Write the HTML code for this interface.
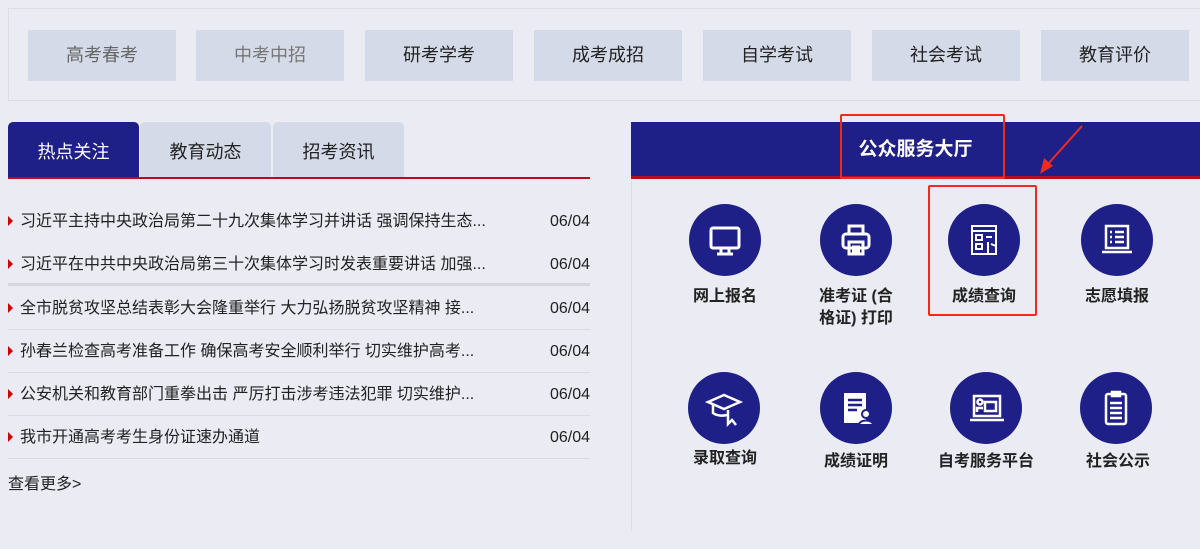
<!DOCTYPE html>
<html><head><meta charset="utf-8"><style>
*{margin:0;padding:0;box-sizing:border-box}
body{width:1200px;height:549px;background:#eaebf3;font-family:"Liberation Sans","Noto Sans CJK SC",sans-serif;position:relative;overflow:hidden;color:#222}
.top{position:absolute;left:8px;top:8px;width:1200px;height:93px;border:1px solid #dcdde6;border-right:none}
.btn{position:absolute;top:30px;width:148px;height:51px;background:#d5dae8;font-size:18px;text-align:center;line-height:51px;color:#222}
.tab{position:absolute;top:122px;height:56px;width:131px;background:#d5dae8;border-radius:5px 5px 0 0;font-size:18px;text-align:center;line-height:60px}
.red{position:absolute;left:8px;top:177px;width:582px;height:2px;background:#b3101c}
.row{position:absolute;left:8px;width:582px;height:43px;font-size:16px;line-height:43px;border-bottom:1px solid #d9dae2}
.row:before{content:"";position:absolute;left:0;top:16px;border-left:5px solid #c00;border-top:5px solid transparent;border-bottom:5px solid transparent}
.row span{position:absolute;left:12px}.row b{position:absolute;right:0;font-weight:normal}
.hd{position:absolute;left:631px;top:122px;width:569px;height:54px;background:#1e1f87;color:#fff;font-size:19px;font-weight:bold;text-align:center;line-height:56px}
.hdl{position:absolute;left:631px;top:176px;width:569px;height:3px;background:#b3101c}
.vl{position:absolute;left:631px;top:179px;width:1px;height:352px;background:#dcdde6}
.ic{position:absolute;width:72px;height:72px;border-radius:50%;background:#1e1f87}
.ic svg{width:72px;height:72px}
.lb{position:absolute;width:120px;text-align:center;font-size:16px;line-height:22px;font-weight:bold;color:#222}
.box{position:absolute;border:2px solid #f02a1f;border-radius:2px}
</style></head><body>
<div class="top"></div>
<div class="btn" style="left:28px;color:#666">高考春考</div>
<div class="btn" style="left:196px;color:#777">中考中招</div>
<div class="btn" style="left:365px">研考学考</div>
<div class="btn" style="left:534px">成考成招</div>
<div class="btn" style="left:703px">自学考试</div>
<div class="btn" style="left:872px">社会考试</div>
<div class="btn" style="left:1041px">教育评价</div>

<div class="tab" style="left:8px;background:#1e1f87;color:#fff">热点关注</div>
<div class="tab" style="left:140px">教育动态</div>
<div class="tab" style="left:273px">招考资讯</div>
<div class="red"></div>

<div class="row" style="top:200px;border:none"><span>习近平主持中央政治局第二十九次集体学习并讲话 强调保持生态...</span><b>06/04</b></div>
<div class="row" style="top:243px;border-bottom:3px solid #d5d6de"><span>习近平在中共中央政治局第三十次集体学习时发表重要讲话 加强...</span><b>06/04</b></div>
<div class="row" style="top:287px"><span>全市脱贫攻坚总结表彰大会隆重举行 大力弘扬脱贫攻坚精神 接...</span><b>06/04</b></div>
<div class="row" style="top:330px"><span>孙春兰检查高考准备工作 确保高考安全顺利举行 切实维护高考...</span><b>06/04</b></div>
<div class="row" style="top:373px"><span>公安机关和教育部门重拳出击 严厉打击涉考违法犯罪 切实维护...</span><b>06/04</b></div>
<div class="row" style="top:416px"><span>我市开通高考考生身份证速办通道</span><b>06/04</b></div>
<div style="position:absolute;left:8px;top:470px;font-size:16px">查看更多&gt;</div>

<div class="hd">公众服务大厅</div><div class="hdl"></div><div class="vl"></div>

<div class="ic" style="left:689px;top:204px"><svg viewBox="0 0 72 72" fill="none" stroke="#fff" stroke-width="3"><rect x="22" y="24" width="28" height="20" rx="2"/><path d="M32 44v5M40 44v5M28 50h16"/></svg></div>
<div class="ic" style="left:820px;top:204px"><svg viewBox="0 0 72 72" fill="none" stroke="#fff" stroke-width="3"><rect x="29" y="22" width="14" height="8"/><rect x="23" y="30" width="26" height="14" rx="3"/><rect x="29" y="38" width="14" height="12"/><path d="M32 43h8M32 47h8"/></svg></div>
<div class="ic" style="left:948px;top:204px"><svg viewBox="0 0 72 72" fill="none" stroke="#fff" stroke-width="2"><rect x="24" y="22" width="24" height="28"/><path d="M24 27h24"/><rect x="28" y="31" width="6" height="5"/><rect x="28" y="40" width="6" height="5"/><path d="M38 33h6M40 38v12h8v-8l-5-2"/></svg></div>
<div class="ic" style="left:1081px;top:204px"><svg viewBox="0 0 72 72" fill="none" stroke="#fff" stroke-width="2.5"><rect x="25" y="22" width="22" height="22"/><path d="M21 48h30M29 28h2M34 28h9M29 33h2M34 33h9M29 38h2M34 38h9"/></svg></div>

<div class="ic" style="left:688px;top:372px"><svg viewBox="0 0 72 72" fill="none" stroke="#fff" stroke-width="2.5"><path d="M20 30l16-7 16 7-16 7z"/><path d="M25 33v8c4 3 10 3 14 2"/><path d="M40 38l0 14 4-4 4 5"/></svg></div>
<div class="ic" style="left:820px;top:372px"><svg viewBox="0 0 72 72"><rect x="24" y="21" width="22" height="30" fill="#fff"/><path d="M28 28h14M28 33h14M28 38h9" stroke="#1e1f87" stroke-width="2.5"/><circle cx="46" cy="42" r="4" fill="#fff" stroke="#1e1f87" stroke-width="2"/><path d="M39 53c0-6 14-6 14 0z" fill="#fff" stroke="#1e1f87" stroke-width="2"/></svg></div>
<div class="ic" style="left:950px;top:372px"><svg viewBox="0 0 72 72" fill="none" stroke="#fff" stroke-width="2.5"><rect x="24" y="24" width="26" height="20"/><path d="M20 48h34"/><rect x="35" y="30" width="11" height="9"/><circle cx="30" cy="30" r="2.5"/><path d="M27 40v-4h6"/></svg></div>
<div class="ic" style="left:1080px;top:372px"><svg viewBox="0 0 72 72" fill="none" stroke="#fff" stroke-width="2.5"><rect x="26" y="22" width="20" height="30" rx="2"/><rect x="32" y="20" width="8" height="4"/><path d="M30 31h12M30 36h12M30 41h12M30 46h12"/></svg></div>

<div class="lb" style="left:665px;top:286px">网上报名</div>
<div class="lb" style="left:812px;top:286px;width:88px">准考证 (合格证) 打印</div>
<div class="lb" style="left:924px;top:286px">成绩查询</div>
<div class="lb" style="left:1057px;top:286px">志愿填报</div>
<div class="lb" style="left:665px;top:448px">录取查询</div>
<div class="lb" style="left:796px;top:451px">成绩证明</div>
<div class="lb" style="left:926px;top:451px">自考服务平台</div>
<div class="lb" style="left:1058px;top:451px">社会公示</div>

<div class="box" style="left:840px;top:114px;width:165px;height:65px"></div>
<div class="box" style="left:928px;top:185px;width:109px;height:131px"></div>
<svg style="position:absolute;left:1030px;top:120px" width="60" height="60"><path d="M52 6L18 44" stroke="#f02a1f" stroke-width="2"/><path d="M10 54l4-16 9 8z" fill="#f02a1f"/></svg>
</body></html>
